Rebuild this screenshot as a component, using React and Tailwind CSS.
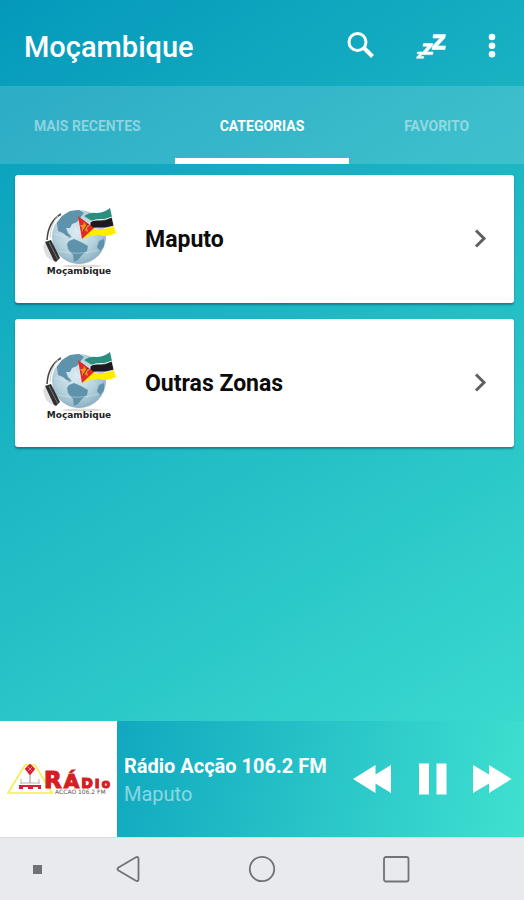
const tabs = ["MAIS RECENTES", "CATEGORIAS", "FAVORITO"];
const categories = ["Maputo", "Outras Zonas"];

function GlobeLogo() {
  return (
    <svg viewBox="0 0 110 100" className="h-[100px] w-[110px] shrink-0" aria-hidden="true">
      <defs>
        <radialGradient id="sea" cx="0.45" cy="0.4" r="0.65">
          <stop offset="0" stopColor="#dcecf2" />
          <stop offset="0.6" stopColor="#b4d1dc" />
          <stop offset="1" stopColor="#84abbc" />
        </radialGradient>
      </defs>
      <ellipse cx="52" cy="77" rx="20" ry="1.5" fill="#dcdcdc" />
      <circle cx="49" cy="48" r="27" fill="url(#sea)" />
      <g fill="#5f93ab">
        <path d="M27 34 L32 27 L40 22 L49 21 L54 24 L50 29 L47 33 L42 35 L40 39 L36 39 L38 44 L42 48 L39 49 L33 44 L28 42 Z" />
        <path d="M39 52 L44 50 L51 53 L58 57 L57 62 L52 66 L48 71 L44 73 L43 66 L38 60 L37 55 Z" />
        <path d="M69 52 L74 50 L74 57 L70 62 L67 58 Z" />
      </g>
      <path d="M24 45 Q35 49 48 48 T75 44 M28 62 Q48 67 69 61" fill="none" stroke="#e3eff3" strokeWidth="0.7" opacity="0.6" />
      <path d="M31 25 Q18 33 17 51" fill="none" stroke="#444" strokeWidth="1.5" />
      <path d="M28 27 Q21 34 20 49" fill="none" stroke="#ccc" strokeWidth="1" />
      <path d="M15 53 L21 51 L30 69 L26 73 L21 70 Z" fill="#303030" />
      <path d="M15 53 L13 58 L16 67 L21 71 L24 72 Z" fill="#dedede" />
      <path d="M19 53 L28 71" stroke="#777" strokeWidth="1" />
      <path d="M54 27 Q60 23 66 24 Q74 24 80 19 L82 28 Q74 31 67 30 L62 32 Z" fill="#2b8f80" />
      <path d="M60 33 Q63 31 67 31 Q75 32 82 28 L84 37 Q75 40 67 39 Q63 39 60 40 Z" fill="#1b1b1b" stroke="#fff" strokeWidth="0.8" />
      <path d="M58 42 Q63 39 67 40 Q76 41 84 37 L86 44 Q77 49 69 46 Q60 46 53 50 Z" fill="#ffed00" />
      <path d="M48 27 L64 39 L52 50 Z" fill="#e52625" />
      <path d="M54 33 L56 36 L60 36 L57 39 L58 43 L54 41 L52 43 L52 39 L50 36 L53 36 Z" fill="#f08a2b" />
      <path d="M53 42 L58 35" stroke="#5a3320" strokeWidth="1" />
      <text x="49" y="85" textAnchor="middle" className="fill-[#222] font-['DejaVu_Sans',sans-serif] text-[9px] font-bold">
        Moçambique
      </text>
    </svg>
  );
}

function StationLogo() {
  return (
    <svg viewBox="0 0 117 116" className="h-[116px] w-[117px]" role="img" aria-label="Rádio Acção">
      <path d="M25 44 L8 72 L52 72 L35 44 Z" fill="none" stroke="#f6ee4c" strokeWidth="1.6" />
      <path d="M30 44 L34 48 L30 53 L26 48 Z" fill="#d92032" stroke="#d92032" strokeWidth="2" strokeLinejoin="round" />
      <path d="M28 46 L32 50 M32 46 L28 50" stroke="#f3a5a5" strokeWidth="0.8" />
      <path d="M30 54 V62" stroke="#777" strokeWidth="0.8" />
      <path d="M21 58 V63 M39 58 V63 M21 62 H39" stroke="#aaa" strokeWidth="0.9" fill="none" />
      <path d="M19 64 H41 V68 H38 V66 H33 V68 H28 V66 H23 V68 H19 Z" fill="#d92032" />
      <text x="44" y="67" className="fill-[#d51d23] font-['DejaVu_Sans',sans-serif] font-bold" stroke="#d51d23" strokeWidth="1.2">
        <tspan className="text-[23px]">R</tspan>
        <tspan dx="2" className="text-[20px]">Á</tspan>
        <tspan dx="2" className="text-[14px]">D</tspan>
        <tspan dx="2" className="text-[13px]">I</tspan>
        <tspan dx="2" className="text-[12px]">o</tspan>
      </text>
      <text x="55" y="73" className="fill-[#555] font-['DejaVu_Sans',sans-serif] text-[6px]">ACCAO 106.2 FM</text>
    </svg>
  );
}

export default function App() {
  return (
    <div className="flex min-h-screen flex-col bg-[#e8eaee] font-['Roboto',sans-serif]">
      <div className="flex flex-1 flex-col bg-[linear-gradient(148deg,#0499bb,#40e0d0)]">
        <header className="flex h-[86px] items-center pt-2 pr-4 pl-6 text-white">
          <h1 className="flex-1 text-[29px] leading-8 font-medium">Moçambique</h1>
          <div className="flex items-center">
            <button type="button" aria-label="Pesquisar" className="mr-9">
              <svg viewBox="0 0 36 36" className="size-9" fill="none" stroke="currentColor" strokeWidth="3">
                <circle cx="15.500" cy="13" r="8.5" />
                <path d="M21.500 18.500 L30.500 27.500" strokeWidth="4" />
              </svg>
            </button>
            <button type="button" aria-label="Temporizador" className="mr-[26px]">
              <svg viewBox="0 0 36 36" className="size-9" fill="currentColor" stroke="currentColor" strokeWidth="0.6">
                <path d="M19.500 5.500 H31.500 L31 8.800 L23.500 17 H31.500 L31 20.500 H18 L18.500 17.200 L26 9 H19 Z" />
                <path d="M9.500 14.500 H18.800 L18.300 17 L12.800 23 H19 L18.600 25.600 H8.200 L8.600 23.200 L14 17.200 H9 Z" />
                <path d="M3.500 23 H9.500 L9.200 24.600 L6 27.600 H9.800 L9.500 29.300 H2.600 L2.900 27.800 L6.200 24.700 H3.200 Z" />
              </svg>
            </button>
            <button type="button" aria-label="Mais opções">
              <svg viewBox="0 0 32 36" className="h-9 w-8" fill="currentColor">
                <circle cx="16" cy="8" r="3.300" />
                <circle cx="16" cy="16.700" r="3.300" />
                <circle cx="16" cy="25.300" r="3.300" />
              </svg>
            </button>
          </div>
        </header>

        <div role="tablist" className="grid h-[78px] grid-cols-3 bg-white/15">
          {tabs.map((tab, i) => (
            <button
              key={tab}
              type="button"
              role="tab"
              aria-selected={i === 1}
              className={
                i === 1
                  ? "border-t-8 border-b-6 border-t-transparent border-b-white text-sm font-bold text-white"
                  : "border-t-8 border-b-6 border-transparent text-sm font-bold text-white/45"
              }
            >
              {tab}
            </button>
          ))}
        </div>

        <ul className="flex flex-1 flex-col gap-4 pt-[11px] pr-[10px] pb-4 pl-[15px]">
          {categories.map((name) => (
            <li key={name}>
              <button
                type="button"
                className="flex h-32 w-full items-center rounded-[3px] bg-white pr-5 pl-[15px] text-left shadow-[0_2px_2px_rgba(0,60,80,0.45)]"
              >
                <GlobeLogo />
                <span className="ml-[5px] flex-1 pt-0.5 text-[23px] leading-7 font-bold text-[#0c0c0c]">{name}</span>
                <svg viewBox="0 0 28 28" className="size-7" fill="none" stroke="#606060" strokeWidth="3">
                  <path d="M10 5.500 L18 13.500 L10 21.500" />
                </svg>
              </button>
            </li>
          ))}
        </ul>

        <section className="flex h-[116px] items-center bg-[linear-gradient(102deg,#0499bb,#40e0d0)] pr-3 text-white">
          <div className="w-[117px] bg-white">
            <StationLogo />
          </div>
          <div className="min-w-0 flex-1 pt-0.5 pl-[7px]">
            <p className="text-xl leading-7 font-bold whitespace-nowrap">Rádio Acção 106.2 FM</p>
            <p className="text-xl leading-7 text-white/50">Maputo</p>
          </div>
          <div className="flex items-center gap-5">
            <button type="button" aria-label="Anterior">
              <svg viewBox="0 0 40 40" className="size-10" fill="currentColor">
                <path d="M1 20 L23.500 6 V15.500 L39 6 V34 L23.500 24.500 V34 Z" />
              </svg>
            </button>
            <button type="button" aria-label="Pausa">
              <svg viewBox="0 0 40 40" className="size-10" fill="currentColor">
                <path d="M7 4.500 H17 V35.500 H7 Z M24.500 4.500 H34.500 V35.500 H24.500 Z" />
              </svg>
            </button>
            <button type="button" aria-label="Seguinte">
              <svg viewBox="0 0 40 40" className="size-10" fill="currentColor">
                <path d="M39.500 20 L17 6 V15.500 L1 6 V34 L17 24.500 V34 Z" />
              </svg>
            </button>
          </div>
        </section>
      </div>

      <nav className="flex h-[63px] items-center border-t border-[#d8dce0] pl-[23px] text-[#707276]">
        <span className="mx-[10px] size-[9px] bg-[#707276]" />
        <div className="flex flex-1 justify-between pr-[112px] pl-[60px]">
          <button type="button" aria-label="Voltar">
            <svg viewBox="0 0 32 32" className="size-8" fill="none" stroke="currentColor" strokeWidth="1.800" strokeLinejoin="round">
              <path d="M23.500 4.500 Q26.500 3 26.500 6 V26 Q26.500 29 23.500 27.500 L6.500 17.500 Q4.500 16 6.500 14.500 Z" />
            </svg>
          </button>
          <button type="button" aria-label="Início">
            <svg viewBox="0 0 32 32" className="size-8" fill="none" stroke="currentColor" strokeWidth="1.800">
              <circle cx="16" cy="16" r="12.200" />
            </svg>
          </button>
          <button type="button" aria-label="Aplicações recentes">
            <svg viewBox="0 0 32 32" className="size-8" fill="none" stroke="currentColor" strokeWidth="1.800">
              <rect x="4" y="4" width="24.500" height="24.500" rx="2" />
            </svg>
          </button>
        </div>
      </nav>
    </div>
  );
}
